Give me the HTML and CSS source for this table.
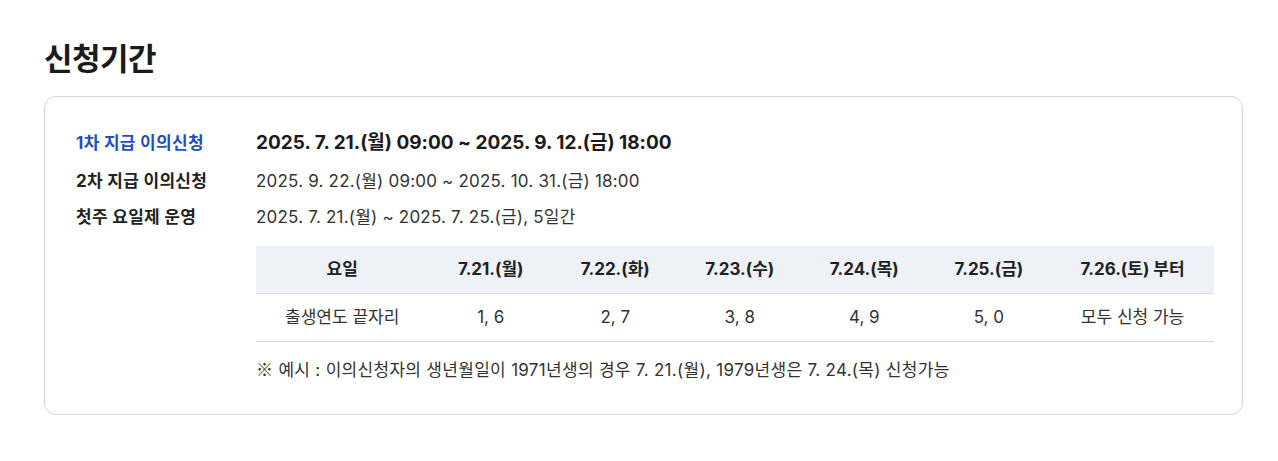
FILE: index.html
```html
<!DOCTYPE html>
<html lang="ko">
<head>
<meta charset="utf-8">
<link rel="stylesheet" href="styles.css">
</head>
<body>
<section class="page">
  <h2 class="title">신청기간</h2>
  <div class="box">
    <dl class="rows">
      <dt class="label label-blue">1차 지급 이의신청</dt>
      <dd class="value value-strong">2025. 7. 21.(월) 09:00 ~ 2025. 9. 12.(금) 18:00</dd>
      <dt class="label">2차 지급 이의신청</dt>
      <dd class="value">2025. 9. 22.(월) 09:00 ~ 2025. 10. 31.(금) 18:00</dd>
      <dt class="label">첫주 요일제 운영</dt>
      <dd class="value">
        2025. 7. 21.(월) ~ 2025. 7. 25.(금), 5일간
        <table class="week">
          <colgroup>
            <col class="c-first"><col class="c-day"><col class="c-day"><col class="c-day"><col class="c-day"><col class="c-day"><col class="c-last">
          </colgroup>
          <thead>
            <tr><th>요일</th><th>7.21.(월)</th><th>7.22.(화)</th><th>7.23.(수)</th><th>7.24.(목)</th><th>7.25.(금)</th><th>7.26.(토) 부터</th></tr>
          </thead>
          <tbody>
            <tr><td>출생연도 끝자리</td><td>1, 6</td><td>2, 7</td><td>3, 8</td><td>4, 9</td><td>5, 0</td><td>모두 신청 가능</td></tr>
          </tbody>
        </table>
        <p class="note"><span class="mark">※</span> 예시 : 이의신청자의 생년월일이 1971년생의 경우 7. 21.(월), 1979년생은 7. 24.(목) 신청가능</p>
      </dd>
    </dl>
  </div>
</section>
</body>
</html>
```

FILE: styles.css
```css
* { box-sizing: border-box; }
html, body { margin: 0; padding: 0; background: #fff; }
body {
  font-family: Inter, "Noto Sans CJK KR", "Noto Sans", sans-serif;
  color: #222;
}
.page {
  padding: 32px 35px 0 44px;
}
.title {
  margin: 0;
  font-family: "Noto Sans CJK KR", sans-serif;
  font-size: 31px;
  line-height: 50px;
  font-weight: 700;
  color: #1b1b1b;
  letter-spacing: -0.5px;
}
.box {
  margin-top: 14px;
  border: 1px solid #d5d6dc;
  border-radius: 12px;
  padding: 34px 29px 26px 31px;
  height: 319px;
}
.rows {
  margin: 0;
  display: grid;
  grid-template-columns: 180px 1fr;
  row-gap: 12px;
}
.label {
  margin: 0;
  font-size: 17px;
  font-weight: 700;
  line-height: 24px;
  letter-spacing: 0.3px;
  color: #222;
}
.label-blue { color: #1f4fc0; }
.value {
  margin: 0;
  font-size: 17px;
  line-height: 24px;
  letter-spacing: 0.2px;
  color: #333;
}
.value-strong {
  font-size: 19px;
  font-weight: 700;
  color: #1b1b1b;
  line-height: 28px;
  letter-spacing: 0;
  margin-top: -2px;
}
.week {
  width: 958px;
  margin-top: 17px;
  border-collapse: collapse;
  table-layout: fixed;
  font-size: 17px;
  letter-spacing: 0;
}
.c-first { width: 18%; }
.c-day { width: 13%; }
.c-last { width: 17%; }
.week th {
  background: #eef1f6;
  height: 47px;
  font-weight: 700;
  color: #222;
  text-align: center;
  border-bottom: 1px solid #d8dde6;
  padding: 0;
}
.week td {
  height: 48px;
  text-align: center;
  color: #333;
  border-bottom: 1px solid #d5d6da;
  padding: 0;
}
.note {
  margin: 15px 0 0;
  font-size: 17px;
  line-height: 24px;
  letter-spacing: 0.3px;
  color: #333;
}
.mark {
  font-family: "Noto Sans CJK KR", sans-serif;
}
```
